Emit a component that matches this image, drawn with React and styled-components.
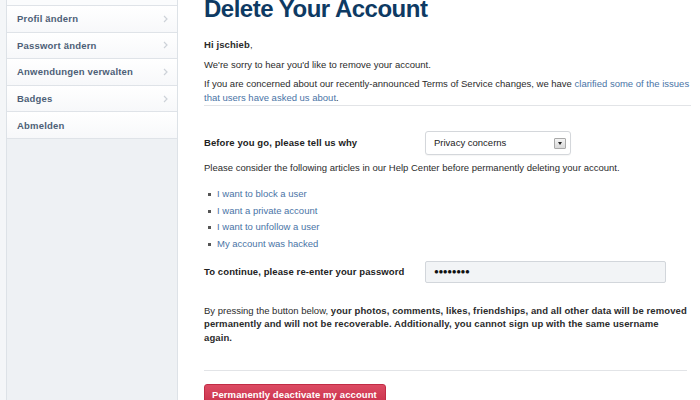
import React from 'react'
import styled, { createGlobalStyle } from 'styled-components'

const GlobalStyle = createGlobalStyle`
  html, body {
    margin: 0;
    padding: 0;
    background: #ffffff;
    overflow: hidden;
  }
  body {
    font-family: "Liberation Sans", Arial, sans-serif;
    color: #2b2b2b;
  }
`

export const Page = styled.div`
  display: flex;
  height: 400px;
  overflow: hidden;
  background: #ffffff;
`

export const Gutter = styled.div`
  width: 6px;
  flex: none;
  background: #f4f6f8;
`

export const Sidebar = styled.nav`
  width: 170px;
  flex: none;
  background: #eef1f4;
  border-left: 1px solid #dde2e7;
  border-right: 1px solid #dde2e7;
`

export const Menu = styled.ul`
  list-style: none;
  margin: 0;
  padding: 0;
`

export const MenuStub = styled.li`
  height: 6px;
  box-sizing: border-box;
  background: #fbfcfd;
  border-bottom: 1px solid #dfe3e8;
`

export const MenuItem = styled.li`
  height: 26.6px;
  box-sizing: border-box;
  display: flex;
  align-items: center;
  justify-content: space-between;
  padding: 0 9px 0 10px;
  background: linear-gradient(#ffffff, #f7f8fa);
  border-bottom: 1px solid #dfe3e8;
  font-size: 9.5px;
  font-weight: bold;
  letter-spacing: 0.2px;
  color: #4d5f77;
`

export const Chevron = styled.svg`
  width: 5px;
  height: 8px;
  flex: none;
`

export const Main = styled.main`
  flex: 1;
  padding: 0 9px 0 26px;
  font-size: 9.5px;
  line-height: 14px;
`

export const Title = styled.h1`
  margin: -3px 0 17px;
  font-size: 24px;
  line-height: 24px;
  font-weight: bold;
  letter-spacing: -0.5px;
  color: #0e3a63;
`

export const Intro = styled.section`
  border-bottom: 1px solid #e2e4e7;
`

export const Para = styled.p`
  margin: 0 0 5.5px;
  &:last-child { margin-bottom: 0; }
`

export const Strong = styled.b`
  letter-spacing: 0.1px;
`

export const Link = styled.a`
  color: #4a74a6;
  text-decoration: none;
`

export const Row = styled.div`
  display: flex;
  align-items: center;
  margin-top: ${p => p.$top}px;
`

export const Label = styled.label`
  width: 221px;
  flex: none;
  font-weight: bold;
  letter-spacing: 0.1px;
  color: #222;
`

export const Select = styled.div`
  width: 146px;
  height: 24px;
  box-sizing: border-box;
  display: flex;
  align-items: center;
  justify-content: space-between;
  padding: 0 4px 0 8px;
  background: #ffffff;
  border: 1px solid #d4d7db;
  border-radius: 3px;
  box-shadow: 0 1px 1px rgba(0, 0, 0, 0.04);
  color: #222;
`

export const SelectArrow = styled.span`
  width: 12px;
  height: 11px;
  box-sizing: border-box;
  display: flex;
  align-items: center;
  justify-content: center;
  background: linear-gradient(#f4f4f4, #d9d9d9);
  border: 1px solid #a9a9a9;
  border-radius: 1px;
  &::after {
    content: "";
    border-left: 2px solid transparent;
    border-right: 2px solid transparent;
    border-top: 3px solid #222;
  }
`

export const Input = styled.div`
  width: 241px;
  height: 22px;
  box-sizing: border-box;
  display: flex;
  align-items: center;
  padding: 0 8px;
  background: #f2f4f6;
  border: 1px solid #d2d6db;
  border-radius: 2px;
  font-size: 8px;
  letter-spacing: -0.4px;
  color: #111;
`

export const Help = styled.p`
  margin: 6px 0 0;
`

export const Articles = styled.ul`
  list-style: none;
  margin: 11px 0 0;
  padding: 0 0 0 13px;
  line-height: 16.6px;
`

export const Article = styled.li`
  position: relative;
  &::before {
    content: "";
    position: absolute;
    left: -9px;
    top: 7px;
    width: 3px;
    height: 3px;
    background: #555;
  }
`

export const Warning = styled.p`
  margin: 21px 4px 0 0;
  padding-bottom: 25.5px;
  line-height: 13.5px;
  border-bottom: 1px solid #e2e4e7;
  color: #2b2b2b;
`

export const DangerButton = styled.button`
  display: block;
  margin-top: 13px;
  height: 22px;
  padding: 0 8px 0 7px;
  border: 1px solid #c12c45;
  border-radius: 3px;
  background: linear-gradient(#dc4b63, #c8304a);
  color: #ffffff;
  font-family: "Liberation Sans", Arial, sans-serif;
  font-size: 9.5px;
  font-weight: bold;
  letter-spacing: 0.1px;
`

const ChevronIcon = () => (
  <Chevron viewBox="0 0 5 8">
    <path d="M1 1l3 3-3 3" fill="none" stroke="#cdd2d8" strokeWidth="1.2" />
  </Chevron>
)

const menu = [
  { label: 'Profil ändern', arrow: true },
  { label: 'Passwort ändern', arrow: true },
  { label: 'Anwendungen verwalten', arrow: true },
  { label: 'Badges', arrow: true },
  { label: 'Abmelden', arrow: false },
]

const articles = [
  'I want to block a user',
  'I want a private account',
  'I want to unfollow a user',
  'My account was hacked',
]

export default function App() {
  return (
    <>
      <GlobalStyle />
      <Page>
        <Gutter />
        <Sidebar>
          <Menu>
            <MenuStub />
            {menu.map(item => (
              <MenuItem key={item.label}>
                {item.label}
                {item.arrow && <ChevronIcon />}
              </MenuItem>
            ))}
          </Menu>
        </Sidebar>
        <Main>
          <Title>Delete Your Account</Title>
          <Intro>
            <Para><Strong>Hi jschieb</Strong>,</Para>
            <Para>We're sorry to hear you'd like to remove your account.</Para>
            <Para>
              If you are concerned about our recently-announced Terms of Service changes, we have{' '}
              <Link href="#">clarified some of the issues that users have asked us about</Link>.
            </Para>
          </Intro>
          <Row $top={25}>
            <Label>Before you go, please tell us why</Label>
            <Select>
              Privacy concerns
              <SelectArrow />
            </Select>
          </Row>
          <Help>Please consider the following articles in our Help Center before permanently deleting your account.</Help>
          <Articles>
            {articles.map(a => (
              <Article key={a}><Link href="#">{a}</Link></Article>
            ))}
          </Articles>
          <Row $top={8.6}>
            <Label>To continue, please re-enter your password</Label>
            <Input>●●●●●●●●</Input>
          </Row>
          <Warning>
            By pressing the button below,{' '}
            <Strong>
              your photos, comments, likes, friendships, and all other data will be removed permanently and will not be recoverable. Additionally, you cannot sign up with the same username
              <br />
              again.
            </Strong>
          </Warning>
          <DangerButton>Permanently deactivate my account</DangerButton>
        </Main>
      </Page>
    </>
  )
}
